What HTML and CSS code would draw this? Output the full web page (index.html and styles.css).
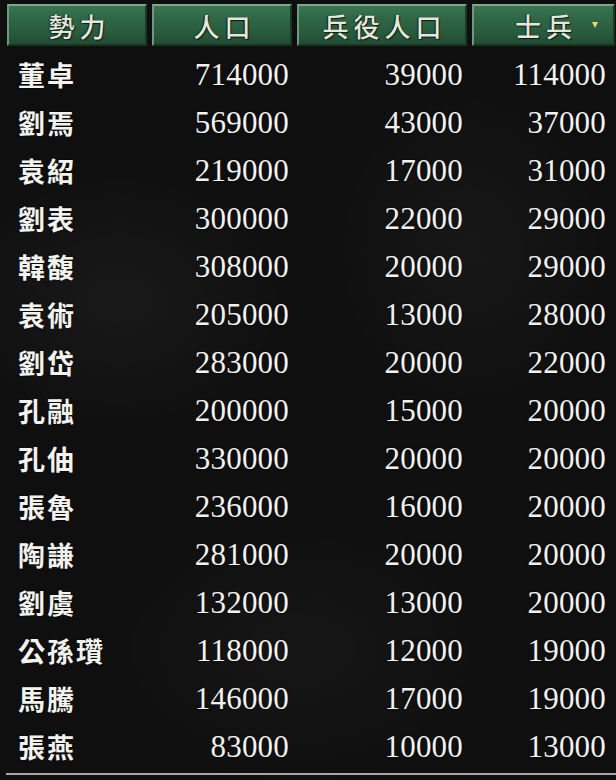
FILE: index.html
```html
<!DOCTYPE html>
<html lang="zh-Hant">
<head>
<meta charset="utf-8">
<link rel="stylesheet" href="styles.css">
</head>
<body>
<div class="screen">
  <div class="table">
    <div class="hd c1"><span>勢力</span></div>
    <div class="hd c2"><span>人口</span></div>
    <div class="hd c3"><span>兵役人口</span></div>
    <div class="hd c4"><span>士兵</span><i class="sort"></i></div>
  </div>
  <div class="rows" id="rows">
    <div class="row"><div class="name">董卓</div><div class="n n2">714000</div><div class="n n3">39000</div><div class="n n4">114000</div></div>
    <div class="row"><div class="name">劉焉</div><div class="n n2">569000</div><div class="n n3">43000</div><div class="n n4">37000</div></div>
    <div class="row"><div class="name">袁紹</div><div class="n n2">219000</div><div class="n n3">17000</div><div class="n n4">31000</div></div>
    <div class="row"><div class="name">劉表</div><div class="n n2">300000</div><div class="n n3">22000</div><div class="n n4">29000</div></div>
    <div class="row"><div class="name">韓馥</div><div class="n n2">308000</div><div class="n n3">20000</div><div class="n n4">29000</div></div>
    <div class="row"><div class="name">袁術</div><div class="n n2">205000</div><div class="n n3">13000</div><div class="n n4">28000</div></div>
    <div class="row"><div class="name">劉岱</div><div class="n n2">283000</div><div class="n n3">20000</div><div class="n n4">22000</div></div>
    <div class="row"><div class="name">孔融</div><div class="n n2">200000</div><div class="n n3">15000</div><div class="n n4">20000</div></div>
    <div class="row"><div class="name">孔伷</div><div class="n n2">330000</div><div class="n n3">20000</div><div class="n n4">20000</div></div>
    <div class="row"><div class="name">張魯</div><div class="n n2">236000</div><div class="n n3">16000</div><div class="n n4">20000</div></div>
    <div class="row"><div class="name">陶謙</div><div class="n n2">281000</div><div class="n n3">20000</div><div class="n n4">20000</div></div>
    <div class="row"><div class="name">劉虞</div><div class="n n2">132000</div><div class="n n3">13000</div><div class="n n4">20000</div></div>
    <div class="row"><div class="name">公孫瓚</div><div class="n n2">118000</div><div class="n n3">12000</div><div class="n n4">19000</div></div>
    <div class="row"><div class="name">馬騰</div><div class="n n2">146000</div><div class="n n3">17000</div><div class="n n4">19000</div></div>
    <div class="row"><div class="name">張燕</div><div class="n n2">83000</div><div class="n n3">10000</div><div class="n n4">13000</div></div>
  </div>
  <div class="bottom-line"></div>
</div>
</body>
</html>
```

FILE: styles.css
```css
html, body {
  margin: 0;
  padding: 0;
  background: #0e0e0e;
}
.screen {
  width: 616px;
  height: 780px;
  overflow: hidden;
  box-sizing: border-box;
  padding-top: 4px;
  background:
    radial-gradient(ellipse 260px 200px at 120px 300px, rgba(255,255,255,0.045), rgba(255,255,255,0) 70%),
    radial-gradient(ellipse 220px 260px at 470px 250px, rgba(255,255,255,0.035), rgba(255,255,255,0) 70%),
    radial-gradient(ellipse 300px 200px at 300px 650px, rgba(255,255,255,0.03), rgba(255,255,255,0) 70%),
    #0f0f0f;
}
.table {
  display: grid;
  grid-template-columns: 140px 140px 170px 143px;
  column-gap: 5px;
  padding-left: 7px;
}
.hd {
  position: relative;
  height: 42px;
  box-sizing: border-box;
  display: flex;
  align-items: center;
  justify-content: center;
  background: linear-gradient(#3a7552 0%, #2f6646 35%, #28593c 75%, #214c33 100%);
  border-top: 2px solid #7fa78d;
  border-left: 2px solid #6d9a7d;
  border-right: 2px solid #173a26;
  border-bottom: 2px solid #163522;
  font-family: "Noto Sans CJK TC", sans-serif;
  font-size: 26px;
  font-weight: 500;
  color: #e6e6dc;
  text-shadow: 1px 1px 1px #0a1f12, -1px 0 1px #0a1f12;
  letter-spacing: 5px;
}
.hd span {
  padding-left: 5px;
}
.sort {
  position: absolute;
  right: 15px;
  top: 16px;
  width: 0;
  height: 0;
  border-left: 3px solid transparent;
  border-right: 3px solid transparent;
  border-top: 6px solid #e8d870;
}
.rows {
  margin-top: 5px;
}
.row {
  display: grid;
  grid-template-columns: 140px 140px 170px 143px;
  column-gap: 5px;
  padding-left: 7px;
  height: 48px;
  align-items: center;
  color: #f2f2ee;
  text-shadow: 0 0 2px rgba(0,0,0,0.8);
}
.name {
  padding-left: 11px;
  font-family: "Noto Sans CJK TC", sans-serif;
  font-size: 27px;
  font-weight: 700;
  letter-spacing: 2px;
  line-height: 48px;
}
.n {
  text-align: right;
  font-family: "Liberation Serif", serif;
  font-size: 31px;
  letter-spacing: 0.2px;
  line-height: 48px;
}
.n2 { padding-right: 3px; }
.n3 { padding-right: 4px; }
.n4 { padding-right: 9px; }
.bottom-line {
  margin-top: 2px;
  margin-left: 6px;
  height: 2px;
  background: #a8a8a8;
}
```
